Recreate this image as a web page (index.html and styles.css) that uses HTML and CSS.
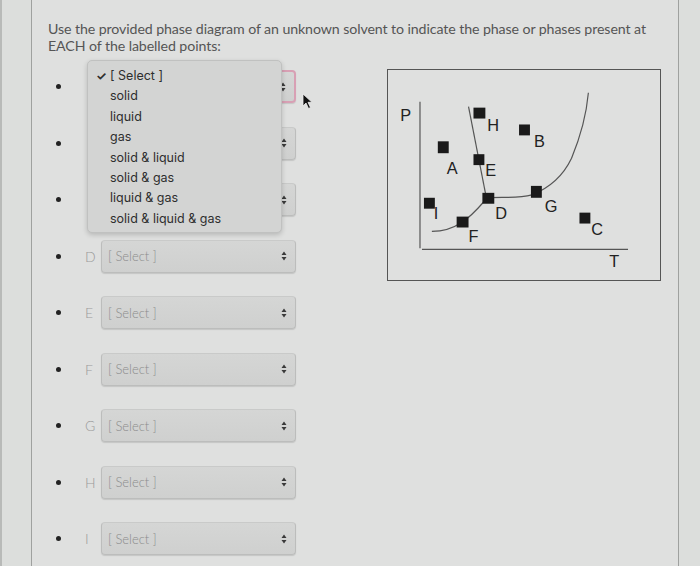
FILE: index.html
```html
<!DOCTYPE html>
<html>
<head>
<meta charset="utf-8">
<link rel="stylesheet" href="styles.css">
</head>
<body>
<div class="edge"></div>
<div class="panel">
  <p class="question">Use the provided phase diagram of an unknown solvent to indicate the phase or phases present at EACH of the labelled points:</p>
  <div class="content">
    <ul class="answers">
      <li class="row covered"><span class="dot"></span><span class="lbl">A</span><span class="sel focus"><span class="ph">[ Select ]</span><svg class="arr" viewBox="0 0 6 10"><path d="M3 0.5 L5.5 4 H0.5 Z M3 9.5 L5.5 6 H0.5 Z"/></svg></span></li>
      <li class="row covered"><span class="dot"></span><span class="lbl">B</span><span class="sel"><span class="ph">[ Select ]</span><svg class="arr" viewBox="0 0 6 10"><path d="M3 0.5 L5.5 4 H0.5 Z M3 9.5 L5.5 6 H0.5 Z"/></svg></span></li>
      <li class="row covered"><span class="dot"></span><span class="lbl">C</span><span class="sel"><span class="ph">[ Select ]</span><svg class="arr" viewBox="0 0 6 10"><path d="M3 0.5 L5.5 4 H0.5 Z M3 9.5 L5.5 6 H0.5 Z"/></svg></span></li>
      <li class="row"><span class="dot"></span><span class="lbl">D</span><span class="sel"><span class="ph">[ Select ]</span><svg class="arr" viewBox="0 0 6 10"><path d="M3 0.5 L5.5 4 H0.5 Z M3 9.5 L5.5 6 H0.5 Z"/></svg></span></li>
      <li class="row"><span class="dot"></span><span class="lbl">E</span><span class="sel"><span class="ph">[ Select ]</span><svg class="arr" viewBox="0 0 6 10"><path d="M3 0.5 L5.5 4 H0.5 Z M3 9.5 L5.5 6 H0.5 Z"/></svg></span></li>
      <li class="row"><span class="dot"></span><span class="lbl">F</span><span class="sel"><span class="ph">[ Select ]</span><svg class="arr" viewBox="0 0 6 10"><path d="M3 0.5 L5.5 4 H0.5 Z M3 9.5 L5.5 6 H0.5 Z"/></svg></span></li>
      <li class="row"><span class="dot"></span><span class="lbl">G</span><span class="sel"><span class="ph">[ Select ]</span><svg class="arr" viewBox="0 0 6 10"><path d="M3 0.5 L5.5 4 H0.5 Z M3 9.5 L5.5 6 H0.5 Z"/></svg></span></li>
      <li class="row"><span class="dot"></span><span class="lbl">H</span><span class="sel"><span class="ph">[ Select ]</span><svg class="arr" viewBox="0 0 6 10"><path d="M3 0.5 L5.5 4 H0.5 Z M3 9.5 L5.5 6 H0.5 Z"/></svg></span></li>
      <li class="row"><span class="dot"></span><span class="lbl">I</span><span class="sel"><span class="ph">[ Select ]</span><svg class="arr" viewBox="0 0 6 10"><path d="M3 0.5 L5.5 4 H0.5 Z M3 9.5 L5.5 6 H0.5 Z"/></svg></span></li>
    </ul>
    <div class="figure">
      <svg class="diagram" viewBox="0 0 274 212" width="274" height="212">
        <g fill="none" stroke="#555" stroke-width="1.2">
          <path d="M32 32 V180"/>
          <path d="M34 181 H242"/>
          <path d="M81 37 L99 129"/>
          <path d="M44 163 C58 163 68 158 74 154 C84 148 92 138 100 129"/>
          <path d="M100 129 C115 128 130 130 145 126 C160 120 175 110 185 89 C195 65 200 45 202 23"/>
        </g>
        <g fill="#1a1a1a">
          <rect x="86" y="38" width="12" height="11"/>
          <rect x="132" y="55" width="11" height="11"/>
          <rect x="50" y="72" width="11" height="12"/>
          <rect x="86" y="85" width="11" height="11"/>
          <rect x="95" y="124" width="12" height="11"/>
          <rect x="144" y="117" width="11" height="12"/>
          <rect x="36" y="129" width="11" height="11"/>
          <rect x="69" y="148" width="12" height="11"/>
          <rect x="193" y="144" width="11" height="11"/>
        </g>
        <g class="dl" fill="#222">
          <text x="12" y="51">P</text>
          <text x="100" y="62">H</text>
          <text x="147" y="78">B</text>
          <text x="59" y="105">A</text>
          <text x="98" y="107">E</text>
          <text x="108" y="150">D</text>
          <text x="158" y="143">G</text>
          <text x="46" y="150">I</text>
          <text x="81" y="174">F</text>
          <text x="205" y="167">C</text>
          <text x="223" y="199">T</text>
        </g>
      </svg>
    </div>
  </div>
</div>
<div class="menu">
  <div class="opt checked"><span class="chk">✓</span>[ Select ]</div>
  <div class="opt">solid</div>
  <div class="opt">liquid</div>
  <div class="opt">gas</div>
  <div class="opt">solid &amp; liquid</div>
  <div class="opt">solid &amp; gas</div>
  <div class="opt">liquid &amp; gas</div>
  <div class="opt">solid &amp; liquid &amp; gas</div>
</div>
<svg class="cursor" viewBox="0 0 12 17" width="12" height="17"><path d="M1 1 L1 13 L4 10 L6.5 15.5 L8.5 14.5 L6 9.3 L10 9.3 Z" fill="#111" stroke="#eee" stroke-width="0.8"/></svg>
</body>
</html>
```

FILE: styles.css
```css
html, body {
  margin: 0;
  padding: 0;
}
body {
  width: 700px;
  height: 566px;
  overflow: hidden;
  background: #dcdedc;
  font-family: Lato, "Liberation Sans", sans-serif;
  position: relative;
}
.edge {
  position: absolute;
  left: 0;
  top: 0;
  width: 2px;
  height: 566px;
  background: #b8bab8;
}
.panel {
  margin-left: 31px;
  width: 648px;
  height: 566px;
  box-sizing: border-box;
  border-left: 1px solid #9fa19f;
  border-right: 1px solid #9fa19f;
  padding: 21px 17px 0 16px;
  background: #dfe0df;
}
.question {
  margin: 0;
  font-size: 14.2px;
  line-height: 16.5px;
  color: #555;
  letter-spacing: -0.1px;
  width: 615px;
}
.content {
  display: flex;
  justify-content: space-between;
  margin-top: 15px;
}
.answers {
  list-style: none;
  margin: 1px 0 0 0;
  padding: 0;
  display: flex;
  flex-direction: column;
  gap: 23.5px;
}
.row {
  display: flex;
  align-items: center;
  height: 33px;
}
.covered .lbl,
.covered .ph {
  visibility: hidden;
}
.dot {
  width: 5px;
  height: 5px;
  border-radius: 50%;
  background: #222;
  margin-left: 8px;
  margin-right: 24px;
}
.lbl {
  font-size: 14px;
  color: #9a9a9a;
  font-weight: 300;
  width: 12px;
  margin-right: 4px;
}
.sel {
  position: relative;
  width: 195px;
  height: 33px;
  box-sizing: border-box;
  border: 1px solid #bcbdbc;
  border-top-color: #c9cac9;
  border-radius: 4px;
  background: linear-gradient(#d5d6d5, #cfd0cf);
  box-shadow: 0 1px 1px rgba(0,0,0,0.12);
  display: flex;
  align-items: center;
  justify-content: space-between;
  padding: 0 8px 0 6px;
}
.sel.focus {
  border: 2px solid #d8a0b4;
}
.ph {
  font-size: 13px;
  color: #8c8c8c;
  font-weight: 300;
}
.arr {
  width: 6px;
  height: 10px;
  fill: #3a3a3a;
}
.diagram {
  display: block;
  border: 1.5px solid #555;
  box-sizing: border-box;
  background: #dfe0df;
}
.dl text {
  font-family: "Liberation Sans", Arial, sans-serif;
  font-size: 16.5px;
}
.menu {
  position: absolute;
  left: 87px;
  top: 60px;
  width: 195px;
  height: 173px;
  box-sizing: border-box;
  background: #d3d4d3;
  border: 1px solid #c0c1c0;
  border-radius: 5px;
  box-shadow: 0 2px 5px rgba(0,0,0,0.18);
  padding-top: 5px;
  font-family: Inter, "Liberation Sans", sans-serif;
}
.opt {
  font-size: 12.5px;
  line-height: 20.4px;
  color: #2e2e2e;
  padding-left: 22px;
  position: relative;
}
.chk {
  position: absolute;
  left: 8px;
  top: 0;
  font-size: 12px;
  font-weight: 700;
}
.cursor {
  position: absolute;
  left: 302px;
  top: 93px;
}
```
